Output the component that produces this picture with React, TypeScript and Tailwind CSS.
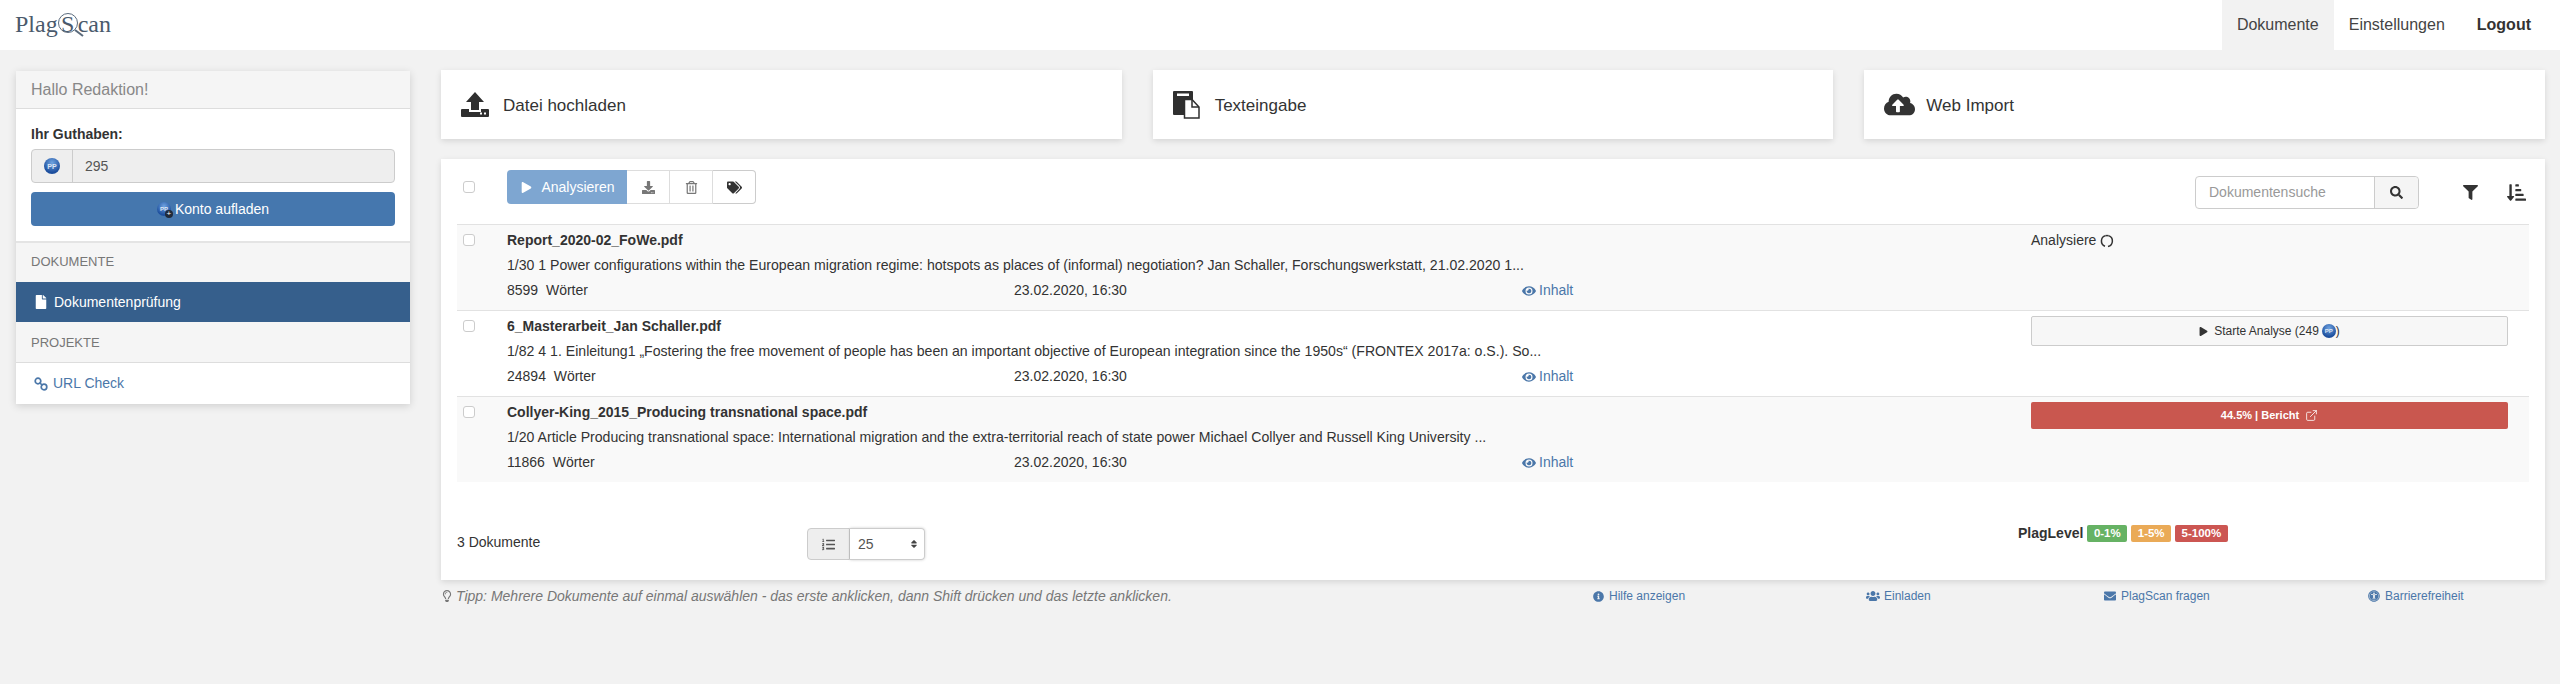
import React, { ReactNode } from 'react';
import {
  FaCloudUploadAlt,
  FaDownload,
  FaEnvelope,
  FaEye,
  FaFile,
  FaFilter,
  FaInfoCircle,
  FaListOl,
  FaPlay,
  FaRegLightbulb,
  FaSearch,
  FaSort,
  FaSortAmountDownAlt,
  FaTags,
  FaRegTrashAlt,
  FaUniversalAccess,
  FaUsers,
} from 'react-icons/fa';
import { ExternalLink } from 'lucide-react';

type Doc = {
  name: string;
  excerpt: string;
  words: string;
  status: ReactNode;
};

function Coin({ small }: { small?: boolean }) {
  return (
    <span
      className={`inline-flex items-center justify-center rounded-full bg-[radial-gradient(circle_at_50%_30%,#6fa3e0,#1d4f9e_70%)] font-bold text-white/80 leading-none ${small ? 'h-[14px] w-[14px] text-[6px]' : 'h-[16px] w-[16px] text-[7px]'}`}
    >
      PP
    </span>
  );
}

function UploadIcon() {
  return (
    <svg width="28" height="25" viewBox="0 0 28 25" fill="#2f2f2f">
      <path d="M14 0l9 10h-5v8h-8v-8H5z" />
      <path d="M1 17h7v3h12v-3h7a1 1 0 0 1 1 1v6a1 1 0 0 1-1 1H1a1 1 0 0 1-1-1v-6a1 1 0 0 1 1-1z" />
      <rect x="19" y="20.5" width="2" height="2" fill="#fff" />
      <rect x="23" y="20.5" width="2" height="2" fill="#fff" />
    </svg>
  );
}

function PasteIcon() {
  return (
    <svg width="27" height="28" viewBox="0 0 27 28">
      <rect x="0" y="0" width="20" height="24" rx="1" fill="#2f2f2f" />
      <rect x="4" y="2.5" width="12" height="2.5" fill="#fff" />
      <path d="M11.5 8.5H19l7 7.5v11H11.5z" fill="#fff" stroke="#2f2f2f" strokeWidth="1.5" />
      <path d="M19 8.5V16h7" fill="none" stroke="#2f2f2f" strokeWidth="1.5" />
    </svg>
  );
}

function ChainIcon() {
  return (
    <svg width="14" height="14" viewBox="0 0 14 14" fill="none" stroke="currentColor" strokeWidth="1.7">
      <circle cx="4" cy="4" r="2.8" />
      <circle cx="10" cy="10" r="2.8" />
      <path d="M5.5 5.5l3 3" />
    </svg>
  );
}

function Spinner() {
  return (
    <svg width="14" height="14" viewBox="0 0 14 14" fill="none" stroke="#333" strokeWidth="1.5">
      <path d="M5.5 1.6A5.6 5.6 0 0 0 5 12.2" />
      <path d="M8 12.4A5.6 5.6 0 0 0 8.5 1.6" />
      <path d="M5.5 1.6h3" />
    </svg>
  );
}

function Logo() {
  return (
    <div className="mt-[-2px] flex items-center text-[24px] leading-none text-[#4a5a6c] font-['Liberation_Serif',serif]">
      Plag
      <span className="relative flex w-[20px] justify-center">
        S
        <svg className="absolute left-0 top-[1px] h-[26px] w-[28px]" viewBox="0 0 28 26" fill="none" stroke="#5a6a7c">
          <circle cx="10" cy="10" r="9.5" strokeWidth="1" />
          <path d="M17 17l8 6" strokeWidth="2" />
        </svg>
      </span>
      can
    </div>
  );
}

function Navbar() {
  return (
    <header className="flex h-[50px] items-center justify-between bg-white pl-[15px] pr-[29px]">
      <Logo />
      <nav className="flex h-full items-center text-[16px] text-[#444]">
        <a className="flex h-full items-center bg-[#f2f2f2] px-[15px]">Dokumente</a>
        <a className="flex h-full items-center px-[15px]">Einstellungen</a>
        <a className="flex h-full items-center pl-[17px] font-bold text-[#333]">Logout</a>
      </nav>
    </header>
  );
}

function Sidebar() {
  return (
    <aside className="mt-[1px] w-[394px] shrink-0 self-start bg-white text-[14px] shadow-[0_2px_8px_rgba(0,0,0,0.15)]">
      <div className="h-[38px] border-b border-[#ddd] bg-[#f5f5f5] px-[15px] text-[16px] font-medium leading-[37px] text-[#888]">
        Hallo Redaktion!
      </div>
      <div className="px-[15px] pb-[15px] pt-[15px]">
        <div className="font-bold leading-[20px] text-[#333]">Ihr Guthaben:</div>
        <div className="mt-[5px] flex h-[34px] rounded-[4px] border border-[#ccc] bg-[#eee]">
          <div className="flex w-[41px] items-center justify-center border-r border-[#ccc]">
            <Coin />
          </div>
          <div className="flex items-center pl-[12px] text-[#555]">295</div>
        </div>
        <button className="mt-[9px] flex h-[34px] w-full items-center justify-center gap-[4px] rounded-[4px] bg-[#4577ae] text-white">
          <span className="relative flex">
            <Coin small />
            <span className="absolute bottom-[-2px] right-[-2px] flex h-[8px] w-[8px] items-center justify-center rounded-full bg-[#1f2a3a] text-[8px] leading-none">
              +
            </span>
          </span>
          Konto aufladen
        </button>
      </div>
      <div className="h-[41px] border-t-2 border-[#e4e4e4] bg-[#f5f5f5] px-[15px] text-[13px] uppercase leading-[38px] text-[#777]">
        Dokumente
      </div>
      <a className="flex h-[40px] items-center gap-[6px] bg-[#365f8c] pl-[18px] text-white">
        <FaFile className="text-[14px]" />
        Dokumentenprüfung
      </a>
      <div className="h-[41px] border-b border-[#ddd] bg-[#f5f5f5] px-[15px] text-[13px] uppercase leading-[42px] text-[#777]">
        Projekte
      </div>
      <a className="flex h-[41px] items-center gap-[5px] pl-[18px] text-[#4b77a9]">
        <ChainIcon />
        URL Check
      </a>
    </aside>
  );
}

function ActionCard({ icon, label, gap }: { icon: ReactNode; label: string; gap: string }) {
  return (
    <div className={`flex h-[69px] items-center bg-white pl-[20px] text-[17px] text-[#333] shadow-[0_2px_6px_rgba(0,0,0,0.12)] ${gap}`}>
      {icon}
      <span className="pt-[2px]">{label}</span>
    </div>
  );
}

function Checkbox() {
  return <span className="block h-[12px] w-[12px] rounded-[3px] border border-[#ccc] bg-white" />;
}

function Toolbar() {
  return (
    <div className="flex h-[54px] items-start">
      <div className="w-[50px] pl-[6px] pt-[11px]">
        <Checkbox />
      </div>
      <div className="flex h-[34px] text-[#777]">
        <button className="flex w-[120px] items-center justify-center gap-[9px] rounded-l-[4px] bg-[#7ea6d1] pl-[2px] text-[14px] text-white">
          <FaPlay className="text-[11px]" />
          Analysieren
        </button>
        <button className="flex w-[43px] items-center justify-center border border-l-0 border-[#ddd]">
          <FaDownload className="text-[13px]" />
        </button>
        <button className="flex w-[43px] items-center justify-center border border-l-0 border-[#ddd]">
          <FaRegTrashAlt className="text-[13px]" />
        </button>
        <button className="flex w-[43px] items-center justify-center rounded-r-[4px] border border-l-0 border-[#ccc]">
          <FaTags className="text-[15px] text-[#333]" />
        </button>
      </div>
      <div className="ml-auto flex items-center pr-[3px] pt-[6px]">
        <div className="flex h-[33px] w-[224px] rounded-[4px] border border-[#ccc]">
          <div className="flex flex-1 items-center pl-[13px] text-[14px] text-[#999]">Dokumentensuche</div>
          <div className="flex w-[44px] items-center justify-center rounded-r-[4px] border-l border-[#ccc] bg-[#f5f5f5]">
            <FaSearch className="text-[13px] text-[#333]" />
          </div>
        </div>
        <FaFilter className="ml-[44px] text-[15px] text-[#333]" />
        <FaSortAmountDownAlt className="ml-[29px] text-[19px] text-[#333]" />
      </div>
    </div>
  );
}

function DocRow({ doc, striped }: { doc: Doc; striped: boolean }) {
  return (
    <div className={`flex h-[86px] border-t border-[#e2e2e2] ${striped ? 'bg-[#f9f9f9]' : 'bg-white'}`}>
      <div className="w-[50px] shrink-0 pl-[6px] pt-[9px]">
        <Checkbox />
      </div>
      <div className="w-[1524px] shrink-0 pt-[3px] text-[14px] leading-[25px] text-[#333]">
        <div className="font-bold">{doc.name}</div>
        <div className="text-[14.1px]">{doc.excerpt}</div>
        <div className="grid grid-cols-[507px_508px_1fr]">
          <div>{doc.words}</div>
          <div>23.02.2020, 16:30</div>
          <div className="flex items-center gap-[3px] text-[#4b77a9]">
            <FaEye className="text-[14px]" />
            Inhalt
          </div>
        </div>
      </div>
      <div className="w-[477px] shrink-0">{doc.status}</div>
    </div>
  );
}

const docs: Doc[] = [
  {
    name: 'Report_2020-02_FoWe.pdf',
    excerpt:
      '1/30 1 Power configurations within the European migration regime: hotspots as places of (informal) negotiation? Jan Schaller, Forschungswerkstatt, 21.02.2020 1...',
    words: '8599\u00a0\u00a0Wörter',
    status: (
      <div className="flex items-center gap-[4px] pt-[3px] text-[14px] leading-[25px] text-[#333]">
        Analysiere
        <Spinner />
      </div>
    ),
  },
  {
    name: '6_Masterarbeit_Jan Schaller.pdf',
    excerpt:
      '1/82 4 1. Einleitung1 „Fostering the free movement of people has been an important objective of European integration since the 1950s“ (FRONTEX 2017a: o.S.). So...',
    words: '24894\u00a0\u00a0Wörter',
    status: (
      <button className="mt-[5px] flex h-[30px] w-full items-center justify-center gap-[6px] rounded-[2px] border border-[#ccc] bg-[#f7f7f7] text-[12px] text-[#333]">
        <FaPlay className="text-[9px]" />
        <span className="flex items-center gap-[3px]">
          Starte Analyse (249
          <span className="flex items-center">
            <Coin small />)
          </span>
        </span>
      </button>
    ),
  },
  {
    name: 'Collyer-King_2015_Producing transnational space.pdf',
    excerpt:
      '1/20 Article Producing transnational space: International migration and the extra-territorial reach of state power Michael Collyer and Russell King University ...',
    words: '11866\u00a0\u00a0Wörter',
    status: (
      <button className="mt-[5px] flex h-[27px] w-full items-center justify-center gap-[6px] rounded-[2px] bg-[#c9574f] text-[11px] font-bold text-white">
        44.5% | Bericht
        <ExternalLink size={13} strokeWidth={1.5} />
      </button>
    ),
  },
];

function PanelFooter() {
  return (
    <div className="flex h-[98px] items-start pt-[46px] text-[14px] text-[#333]">
      <div className="w-[350px] pt-[4px] leading-[20px]">3 Dokumente</div>
      <div className="flex h-[32px] w-[118px]">
        <div className="flex w-[43px] items-center justify-center rounded-l-[4px] border border-[#ccc] bg-[#eee] text-[#555]">
          <FaListOl className="text-[13px]" />
        </div>
        <div className="flex flex-1 items-center justify-between rounded-r-[4px] border border-l-0 border-[#ccc] pl-[8px] pr-[5px] text-[#555] shadow-[0_0_3px_rgba(0,0,0,0.2)]">
          25
          <FaSort className="text-[10px] text-[#444]" />
        </div>
      </div>
      <div className="ml-[1093px] mt-[-5px] flex items-center gap-[4px]">
        <span className="font-bold">PlagLevel</span>
        <span className="rounded-[2px] bg-[#66b264] px-[6.5px] text-[11.5px] font-bold leading-[17px] text-white">0-1%</span>
        <span className="rounded-[2px] bg-[#eaaa57] px-[6.5px] text-[11.5px] font-bold leading-[17px] text-white">1-5%</span>
        <span className="rounded-[2px] bg-[#cc5652] px-[6.5px] text-[11.5px] font-bold leading-[17px] text-white">5-100%</span>
      </div>
    </div>
  );
}

function PageFooter() {
  return (
    <div className="mt-[6px] flex h-[20px] items-center text-[12px] text-[#4b77a9]">
      <div className="flex w-[1152px] items-center gap-[3px] text-[14px] italic text-[#777]">
        <FaRegLightbulb className="text-[12px]" />
        Tipp: Mehrere Dokumente auf einmal auswählen - das erste anklicken, dann Shift drücken und das letzte anklicken.
      </div>
      <div className="flex w-[273px] items-center gap-[5px]">
        <FaInfoCircle className="text-[11px]" />
        Hilfe anzeigen
      </div>
      <div className="flex w-[238px] items-center gap-[4px]">
        <FaUsers className="text-[14px]" />
        Einladen
      </div>
      <div className="flex w-[264px] items-center gap-[5px]">
        <FaEnvelope className="text-[12px]" />
        PlagScan fragen
      </div>
      <div className="flex items-center gap-[5px]">
        <FaUniversalAccess className="text-[12px]" />
        Barrierefreiheit
      </div>
    </div>
  );
}

export default function App() {
  return (
    <div className="min-h-[684px] bg-[#f2f2f2] font-['Liberation_Sans',Arial,sans-serif]">
      <Navbar />
      <main className="flex pl-[16px] pr-[15px] pt-[20px]">
        <Sidebar />
        <div className="ml-[31px] min-w-0 flex-1">
          <div className="grid grid-cols-3 gap-[31px]">
            <ActionCard icon={<UploadIcon />} label="Datei hochladen" gap="gap-[14px]" />
            <ActionCard icon={<PasteIcon />} label="Texteingabe" gap="gap-[15px]" />
            <ActionCard icon={<FaCloudUploadAlt className="text-[31px]" />} label="Web Import" gap="gap-[11px]" />
          </div>
          <section className="mt-[20px] bg-white px-[16px] pt-[11px] shadow-[0_2px_6px_rgba(0,0,0,0.12)]">
            <Toolbar />
            {docs.map((doc, index) => (
              <DocRow key={doc.name} doc={doc} striped={index % 2 === 0} />
            ))}
            <PanelFooter />
          </section>
          <PageFooter />
        </div>
      </main>
    </div>
  );
}
